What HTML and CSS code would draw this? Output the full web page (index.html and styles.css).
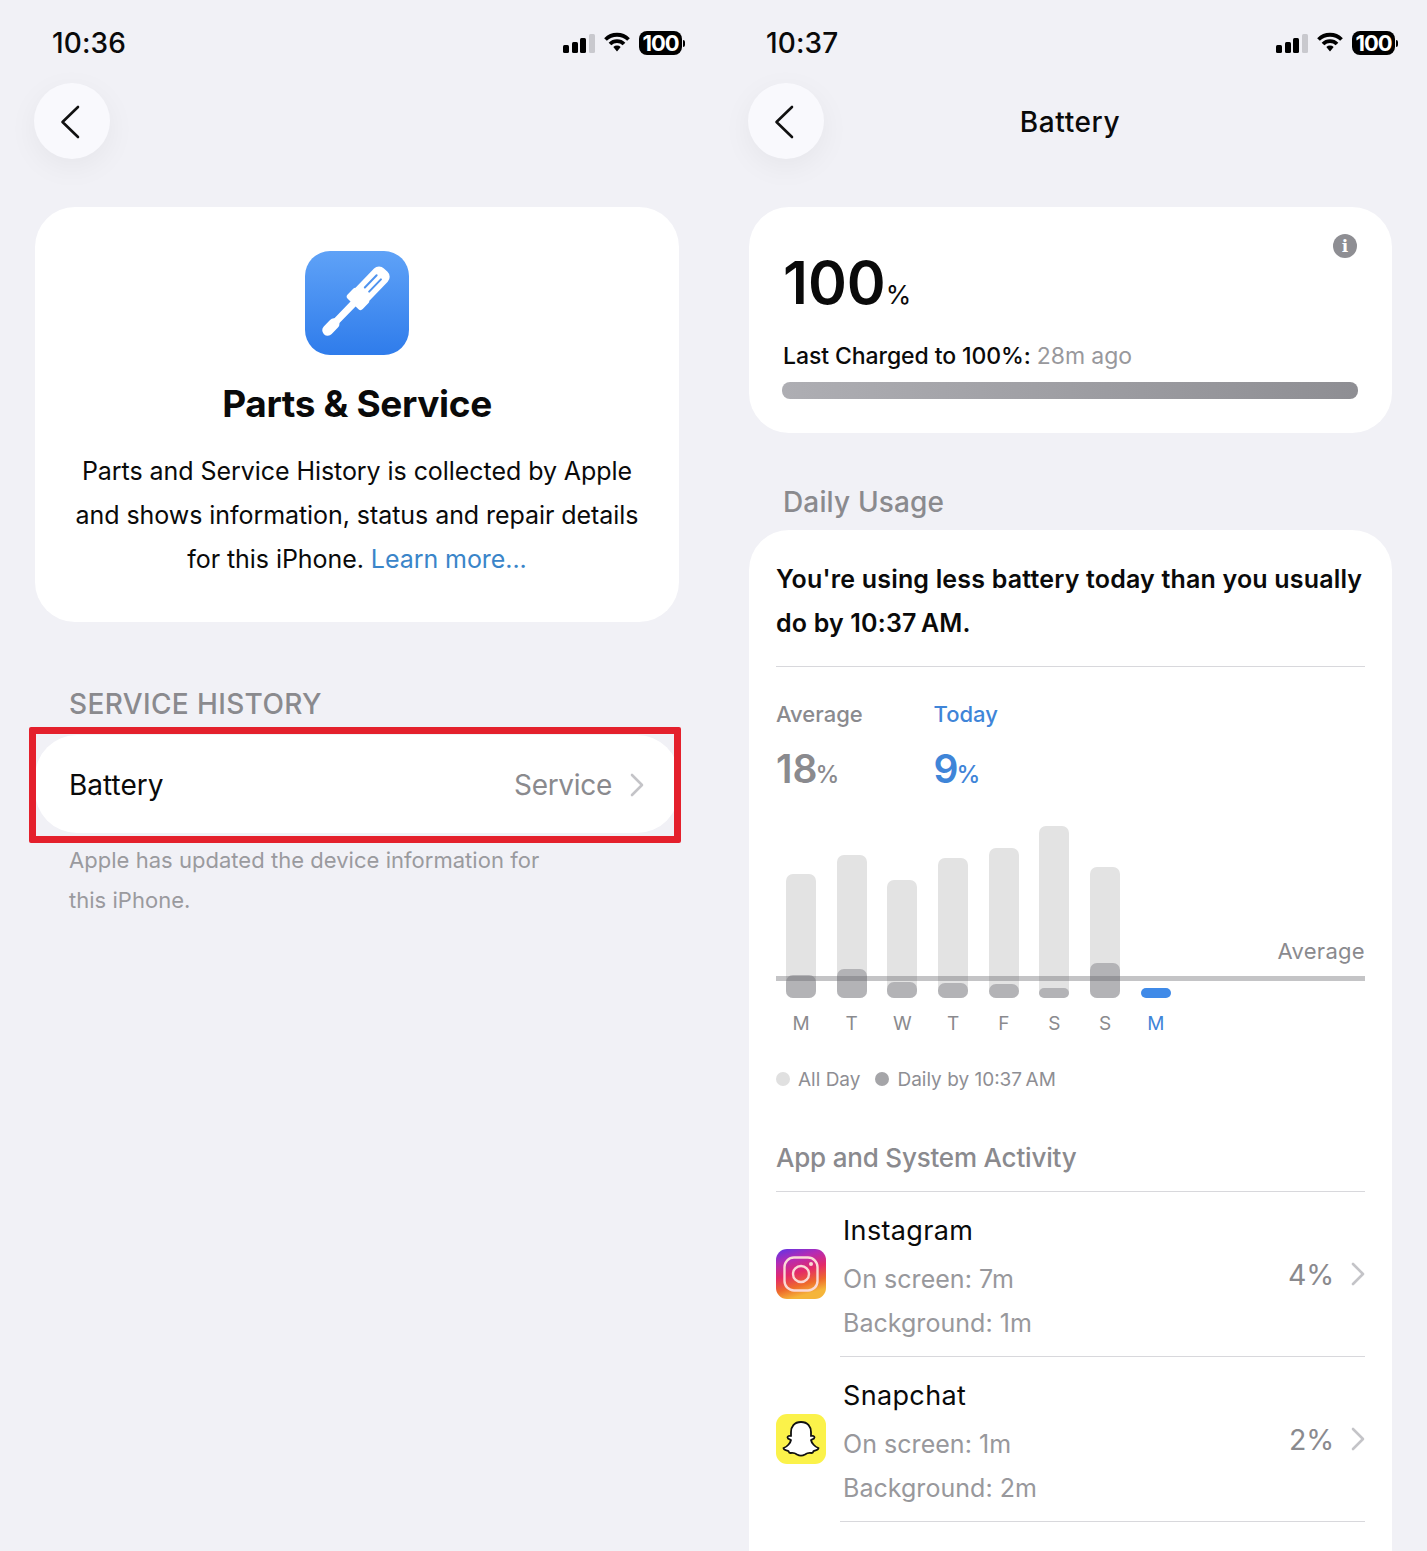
FILE: index.html
```html
<!DOCTYPE html>
<html lang="en">
<head>
    <meta charset="UTF-8">
    <title>Parts and Service / Battery</title>
    <link rel="stylesheet" href="styles.css">
</head>
<body>
<div class="screens">

    <!-- left phone -->
    <section class="screen screen-left">
        <div class="status">
            <span class="time">10:36</span>
            <span class="status-icons">
                <svg width="32" height="19" viewBox="0 0 32 19"><rect x="0" y="11" width="6" height="8" rx="1.5"/><rect x="9" y="8" width="6" height="11" rx="1.5"/><rect x="17" y="4" width="6" height="15" rx="1.5"/><rect x="26" y="0" width="6" height="19" rx="1.5" fill="#c9c9ce"/></svg>
                <svg class="wifi" width="26" height="20" viewBox="0 0 26 20"><path d="M1.500 7.500a16.300 16.300 0 0 1 23 0" fill="none" stroke="#000" stroke-width="3.800"/><path d="M6 12a9.900 9.900 0 0 1 14 0" fill="none" stroke="#000" stroke-width="3.800"/><path d="M9.300 15l3.700 4.600 3.700-4.600a5.400 5.400 0 0 0-7.400 0z"/></svg>
                <span class="batt"><span class="batt-body">100</span><span class="batt-nub"></span></span>
            </span>
        </div>
        <div class="nav">
            <button class="back"><svg width="20" height="34" viewBox="0 0 20 34"><path d="M18 2L2.500 17 18 32" fill="none" stroke="#111" stroke-width="2.600" stroke-linecap="round" stroke-linejoin="round"/></svg></button>
        </div>

        <div class="card card-parts">
            <svg class="parts-icon" width="104" height="104" viewBox="0 0 104 104">
                <defs><linearGradient id="tool" x1="0" y1="0" x2="0" y2="1"><stop offset="0" stop-color="#5fa2f7"/><stop offset="1" stop-color="#2f7ceb"/></linearGradient></defs>
                <rect width="104" height="104" rx="25" fill="url(#tool)"/>
                <g transform="translate(21 81) rotate(-46)" fill="#fff">
                    <rect x="-3" y="-5.500" width="20" height="11" rx="5.500"/>
                    <rect x="12" y="-3.500" width="30" height="7" rx="2"/>
                    <rect x="39" y="-10.500" width="14" height="21" rx="3"/>
                    <rect x="46" y="-9.500" width="40" height="19" rx="7"/>
                    <rect x="58" y="-4" width="19" height="2" rx="1" fill="#4f93ef"/>
                    <rect x="58" y="2" width="19" height="2" rx="1" fill="#4f93ef"/>
                </g>
            </svg>
            <h1 class="parts-title">Parts &amp; Service</h1>
            <p class="parts-text">Parts and Service History is collected by Apple<br>and shows information, status and repair details<br>for this iPhone. <a href="#">Learn more...</a></p>
        </div>

        <h2 class="section-head">SERVICE HISTORY</h2>
        <div class="row-battery">
            <span>Battery</span>
            <span class="row-value">Service
                <svg width="14" height="24" viewBox="0 0 14 24"><path d="M2 2l10 10L2 22" fill="none" stroke="#c4c4c8" stroke-width="2.600" stroke-linecap="round" stroke-linejoin="round"/></svg>
            </span>
            <div class="red-box"></div>
        </div>
        <p class="note">Apple has updated the device information for<br>this iPhone.</p>
    </section>

    <!-- right phone -->
    <section class="screen screen-right">
        <div class="status">
            <span class="time">10:37</span>
            <span class="status-icons">
                <svg width="32" height="19" viewBox="0 0 32 19"><rect x="0" y="11" width="6" height="8" rx="1.5"/><rect x="9" y="8" width="6" height="11" rx="1.5"/><rect x="17" y="4" width="6" height="15" rx="1.5"/><rect x="26" y="0" width="6" height="19" rx="1.5" fill="#c9c9ce"/></svg>
                <svg class="wifi" width="26" height="20" viewBox="0 0 26 20"><path d="M1.500 7.500a16.300 16.300 0 0 1 23 0" fill="none" stroke="#000" stroke-width="3.800"/><path d="M6 12a9.900 9.900 0 0 1 14 0" fill="none" stroke="#000" stroke-width="3.800"/><path d="M9.300 15l3.700 4.600 3.700-4.600a5.400 5.400 0 0 0-7.400 0z"/></svg>
                <span class="batt"><span class="batt-body">100</span><span class="batt-nub"></span></span>
            </span>
        </div>
        <div class="nav">
            <button class="back"><svg width="20" height="34" viewBox="0 0 20 34"><path d="M18 2L2.500 17 18 32" fill="none" stroke="#111" stroke-width="2.600" stroke-linecap="round" stroke-linejoin="round"/></svg></button>
            <span class="nav-title">Battery</span>
        </div>

        <div class="card card-level">
            <div class="level-top">
                <div class="level"><span class="level-num">100</span><span class="level-pct">%</span></div>
                <span class="info">i</span>
            </div>
            <p class="charged">Last Charged to 100%: <span class="muted">28m ago</span></p>
            <div class="progress"></div>
        </div>

        <h2 class="daily-head">Daily Usage</h2>
        <div class="card card-usage">
            <p class="usage-text">You're using less battery today than you usually<br>do by 10:37&#8201;AM.</p>
            <div class="rule"></div>

            <div class="stats">
                <div class="stat">
                    <div class="stat-label">Average</div>
                    <div class="stat-value">18<small>%</small></div>
                </div>
                <div class="stat stat-today">
                    <div class="stat-label">Today</div>
                    <div class="stat-value">9<small>%</small></div>
                </div>
            </div>

            <div class="chart">
                <div class="bars">
                    <div class="bar" style="height:124px"><div class="bar-part" style="height:23px"></div></div>
                    <div class="bar" style="height:143px"><div class="bar-part" style="height:29px"></div></div>
                    <div class="bar" style="height:118px"><div class="bar-part" style="height:16px"></div></div>
                    <div class="bar" style="height:140px"><div class="bar-part" style="height:15px"></div></div>
                    <div class="bar" style="height:150px"><div class="bar-part" style="height:14px"></div></div>
                    <div class="bar" style="height:172px"><div class="bar-part" style="height:10px"></div></div>
                    <div class="bar" style="height:131px"><div class="bar-part" style="height:35px"></div></div>
                    <div class="bar bar-today" style="height:10px"></div>
                </div>
                <div class="avg-line"></div>
                <span class="avg-label">Average</span>
            </div>
            <div class="days">
                <span>M</span><span>T</span><span>W</span><span>T</span><span>F</span><span>S</span><span>S</span><span class="day-today">M</span>
            </div>

            <div class="legend">
                <span class="legend-item"><i class="dot"></i>All Day</span>
                <span class="legend-item"><i class="dot dot-dark"></i>Daily by 10:37&#8201;AM</span>
            </div>

            <h3 class="apps-head">App and System Activity</h3>
            <div class="rule rule-apps"></div>

            <div class="app">
                <svg class="app-icon" width="50" height="50" viewBox="0 0 50 50">
                    <defs>
                        <linearGradient id="ig" x1="0" y1="0" x2="0.3" y2="1"><stop offset="0" stop-color="#5b34e8"/><stop offset="0.28" stop-color="#b52bb4"/><stop offset="0.55" stop-color="#e42a68"/><stop offset="0.8" stop-color="#ee6a2c"/><stop offset="1" stop-color="#f5b53a"/></linearGradient>
                    </defs>
                    <rect width="50" height="50" rx="11" fill="url(#ig)"/>
                    <rect x="8.500" y="8.500" width="33" height="33" rx="9.500" fill="none" stroke="#fbd9d6" stroke-width="2.400"/>
                    <circle cx="25" cy="25" r="8" fill="none" stroke="#fbd9d6" stroke-width="2.400"/>
                    <circle cx="35" cy="15" r="2" fill="#fbd9d6"/>
                </svg>
                <div class="app-body">
                    <div class="app-info">
                        <div class="app-name">Instagram</div>
                        <div class="app-line app-line-first">On screen: 7m</div>
                        <div class="app-line">Background: 1m</div>
                    </div>
                    <span class="app-pct">4%</span>
                    <svg width="14" height="24" viewBox="0 0 14 24"><path d="M2 2l10 10L2 22" fill="none" stroke="#c4c4c8" stroke-width="2.600" stroke-linecap="round" stroke-linejoin="round"/></svg>
                </div>
            </div>

            <div class="app">
                <svg class="app-icon" width="50" height="50" viewBox="0 0 50 50">
                    <rect width="50" height="50" rx="11" fill="#fbf24a"/>
                    <path d="M25 8C18 8 15 13 15 18L15 22C13 21.500 11.500 22 11.500 23.500C11.500 25 14 25.500 15 26C14.500 29 11 33 7.500 34C7.500 36 10.500 36.500 12.500 37C13 38.500 13 39 14.500 39C17 38.500 19 39 21 40.500C23.500 42 26.500 42 29 40.500C31 39 33 38.500 35.500 39C37 39 37 38.500 37.500 37C39.500 36.500 42.500 36 42.500 34C39 33 35.500 29 35 26C36 25.500 38.500 25 38.500 23.500C38.500 22 37 21.500 35 22L35 18C35 13 32 8 25 8Z" fill="#fff" stroke="#111" stroke-width="1.800" stroke-linejoin="round"/>
                </svg>
                <div class="app-body">
                    <div class="app-info">
                        <div class="app-name">Snapchat</div>
                        <div class="app-line app-line-first">On screen: 1m</div>
                        <div class="app-line">Background: 2m</div>
                    </div>
                    <span class="app-pct">2%</span>
                    <svg width="14" height="24" viewBox="0 0 14 24"><path d="M2 2l10 10L2 22" fill="none" stroke="#c4c4c8" stroke-width="2.600" stroke-linecap="round" stroke-linejoin="round"/></svg>
                </div>
            </div>

            <div class="app">
                <div class="app-body app-body-last">
                    <div class="app-info">
                        <div class="app-name">Safari</div>
                    </div>
                </div>
            </div>
        </div>
    </section>
</div>
</body>
</html>
```

FILE: styles.css
```css
* {
    box-sizing: border-box;
}
html, body {
    margin: 0;
    padding: 0;
    height: 1551px;
    overflow: hidden;
}
body {
    background-color: #f1f1f6;
    color: #0a0a0a;
    font-family: Inter, "Liberation Sans", sans-serif;
}
p, h1, h2, h3 {
    margin: 0;
    font-weight: normal;
}
a {
    color: #3a85c9;
    text-decoration: none;
}
.screens {
    display: flex;
}
.screen {
    padding: 25px 35px 0;
}
.screen-left {
    width: 714px;
}
.screen-right {
    width: 713px;
}

/* status bar */
.status {
    display: flex;
    justify-content: space-between;
    align-items: center;
    height: 36px;
    margin: 0 -6px 22px 17px;
}
.time {
    font-size: 28px;
    font-weight: 500;
    letter-spacing: 0.1px;
}
.status-icons {
    display: flex;
    align-items: center;
    gap: 9px;
}
.wifi {
    margin-top: -3px;
}
.batt {
    display: flex;
    align-items: center;
    gap: 1px;
}
.batt-body {
    width: 43px;
    height: 24px;
    border-radius: 8px;
    background: #000;
    color: #fff;
    font-size: 22px;
    font-weight: 700;
    line-height: 24px;
    text-align: center;
    letter-spacing: -1px;
}
.batt-nub {
    width: 2px;
    height: 7px;
    border-radius: 0 2px 2px 0;
    background: #000;
}

/* nav */
.nav {
    display: grid;
    grid-template-columns: 76px 1fr 76px;
    align-items: center;
    height: 76px;
    margin: 0 0 48px -1px;
}
.back {
    display: flex;
    align-items: center;
    justify-content: center;
    width: 76px;
    height: 76px;
    padding: 2px 5px 0 0;
    border: 0;
    border-radius: 50%;
    background: #f9f9fd;
    box-shadow: 0 8px 30px rgba(0, 0, 0, 0.05);
}
.nav-title {
    padding-top: 2px;
    text-align: center;
    font-size: 28px;
    font-weight: 500;
    letter-spacing: 0.6px;
}

/* cards */
.card {
    background: #fff;
    border-radius: 40px;
}
.card-parts {
    height: 415px;
    padding-top: 44px;
    text-align: center;
}
.parts-icon {
    display: block;
    margin: 0 auto;
}
.parts-title {
    margin-top: 27px;
    font-size: 37px;
    line-height: 44px;
    font-weight: 700;
    letter-spacing: -0.36px;
}
.parts-text {
    margin-top: 23px;
    font-size: 25px;
    line-height: 44px;
    letter-spacing: -0.06px;
}
.section-head {
    margin-top: 64px;
    padding-left: 34px;
    color: #8a8a8e;
    font-size: 28px;
    line-height: 36px;
    font-weight: 500;
    letter-spacing: 0.37px;
}
.row-battery {
    position: relative;
    display: flex;
    justify-content: space-between;
    align-items: center;
    height: 98px;
    margin-top: 13px;
    padding: 1px 35px 0 34px;
    border-radius: 42px;
    background: #fff;
    font-size: 28px;
}
.row-value {
    display: flex;
    align-items: center;
    gap: 18px;
    color: #8a8a8e;
    letter-spacing: -0.3px;
}
.red-box {
    position: absolute;
    left: -6px;
    right: -2px;
    top: -8px;
    bottom: -10px;
    border: 7px solid #e4202c;
    border-radius: 2px;
}
.note {
    margin-top: 7px;
    padding-left: 34px;
    color: #9a9a9e;
    font-size: 22px;
    line-height: 40px;
    letter-spacing: 0.03px;
}

/* battery level */
.card-level {
    height: 226px;
    padding: 27px 35px 0 34px;
}
.level-top {
    display: flex;
    justify-content: space-between;
    align-items: flex-start;
}
.level {
    margin-top: 17px;
    height: 64px;
    line-height: 64px;
}
.level-num {
    font-size: 59px;
    font-weight: 600;
}
.level-pct {
    font-size: 26px;
}
.info {
    width: 24px;
    height: 24px;
    border-radius: 50%;
    background: #8e8e93;
    color: #fff;
    font-family: "DejaVu Serif", serif;
    font-size: 17px;
    font-weight: 700;
    line-height: 24px;
    text-align: center;
}
.charged {
    margin-top: 26px;
    font-size: 23px;
    line-height: 30px;
    font-weight: 500;
    letter-spacing: -0.08px;
}
.muted {
    color: #98989c;
    font-weight: 400;
}
.progress {
    height: 17px;
    margin: 11px -1px 0;
    border-radius: 8px;
    background: linear-gradient(90deg, #aeaeb3, #8e8e93);
}
.daily-head {
    margin-top: 51px;
    padding-left: 34px;
    color: #8a8a8e;
    font-size: 28px;
    line-height: 36px;
    font-weight: 500;
    letter-spacing: 0.15px;
}

/* usage card */
.card-usage {
    height: 1021px;
    margin-top: 10px;
    padding: 27px 27px 0;
    border-radius: 40px 40px 0 0;
    overflow: hidden;
}
.usage-text {
    font-size: 25px;
    line-height: 44px;
    font-weight: 600;
    letter-spacing: 0.18px;
}
.rule {
    height: 1px;
    margin-top: 21px;
    background: #d8d8dc;
}
.stats {
    display: flex;
    margin-top: 32px;
}
.stat {
    width: 157.5px;
    color: #8a8a8e;
}
.stat-today {
    color: #3f85d8;
}
.stat-label {
    font-size: 22px;
    line-height: 30px;
    font-weight: 500;
}
.stat-value {
    height: 48px;
    margin-top: 16px;
    font-size: 39px;
    line-height: 48px;
    font-weight: 600;
}
.stat-value small {
    margin-left: -2px;
    font-size: 24px;
    line-height: 1;
    font-weight: 500;
}
.chart {
    position: relative;
    height: 172px;
    margin-top: 33px;
}
.bars {
    display: flex;
    align-items: flex-end;
    gap: 20.7px;
    height: 172px;
    padding-left: 10px;
}
.bar {
    display: flex;
    align-items: flex-end;
    width: 30px;
    border-radius: 7px;
    background: #e3e3e3;
}
.bar-part {
    width: 100%;
    border-radius: 7px;
    background: #b3b3b6;
}
.bar-today {
    border-radius: 5px;
    background: #3f8ae8;
}
.avg-line {
    position: absolute;
    left: 0;
    right: 0;
    top: 150px;
    height: 5px;
    background: rgba(100, 100, 105, 0.38);
}
.avg-label {
    position: absolute;
    right: 0;
    top: 112px;
    color: #8a8a8e;
    font-size: 22px;
    line-height: 26px;
    letter-spacing: 0.3px;
}
.days {
    display: flex;
    gap: 20.7px;
    margin-top: 13px;
    padding-left: 10px;
    color: #8a8a8e;
    font-size: 19px;
    line-height: 26px;
}
.days span {
    width: 30px;
    text-align: center;
}
.days .day-today {
    color: #3f85d8;
}
.legend {
    display: flex;
    gap: 15px;
    margin-top: 30px;
    color: #8e8e93;
    font-size: 19px;
    line-height: 26px;
}
.legend-item {
    display: flex;
    align-items: center;
    gap: 8px;
}
.dot {
    width: 14px;
    height: 14px;
    margin-top: -2px;
    border-radius: 50%;
    background: #e0e0e0;
}
.dot-dark {
    background: #a5a5a8;
}
.apps-head {
    margin-top: 47px;
    color: #8a8a8e;
    font-size: 26px;
    line-height: 36px;
    font-weight: 500;
    letter-spacing: -0.2px;
}
.rule-apps {
    margin-top: 15px;
}

/* app rows */
.app {
    display: flex;
    align-items: center;
    gap: 14px;
}
.app-icon {
    flex: none;
    margin-bottom: 2px;
}
.app-body {
    flex: 1;
    display: flex;
    align-items: center;
    height: 165px;
    padding-left: 3px;
    border-bottom: 1px solid #d8d8dc;
}
.app-body svg {
    flex: none;
}
.app-body-last {
    margin-left: 64px;
    border-bottom: 0;
}
.app-body-last .app-info {
    padding-top: 21px;
}
.app-info {
    flex: 1;
    align-self: flex-start;
    padding-top: 19px;
}
.app-name {
    font-size: 27px;
    line-height: 40px;
    letter-spacing: 0.35px;
}
.app-line {
    color: #98989c;
    font-size: 25px;
    line-height: 44px;
    letter-spacing: 0.04px;
}
.app-line-first {
    margin-top: 6px;
}
.app-pct {
    margin-right: 17px;
    color: #8a8a8e;
    font-size: 28.5px;
    letter-spacing: -0.2px;
}
```
